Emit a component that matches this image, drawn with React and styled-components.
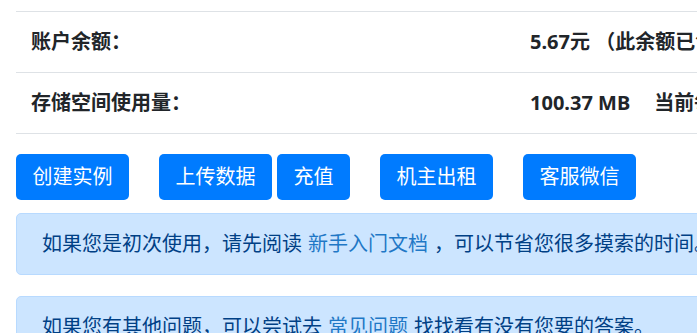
import React from "react";
import styled, { createGlobalStyle } from "styled-components";

const Global = createGlobalStyle`
  html, body { margin: 0; padding: 0; background: #fff; overflow: hidden; }
  body { font-family: "Noto Sans", "Noto Sans CJK SC", sans-serif; color: #212529; }
`;

const Page = styled.div`
  width: 1200px;
  padding: 11px 0 0 16px;
  box-sizing: border-box;
`;

const InfoTable = styled.div`
  display: flex;
  flex-direction: column;
  border-bottom: 1px solid #dee2e6;
`;

const Row = styled.div`
  display: grid;
  grid-template-columns: 499px 1fr;
  border-top: 1px solid #dee2e6;
`;

const Cell = styled.div`
  padding: 15px;
  font-size: 20px;
  line-height: 30px;
  font-weight: 700;
  white-space: nowrap;
  color: #212529;
`;

const Gap = styled.span`
  display: inline-block;
  width: ${(p) => p.w}px;
`;

const ButtonBar = styled.div`
  display: flex;
  margin-top: 20px;
`;

const Button = styled.button`
  margin-left: ${(p) => p.ml || 0}px;
  height: 46px;
  padding: 0 16.5px;
  border: none;
  border-radius: 5px;
  background: #007bff;
  color: #fff;
  font-family: "Noto Sans", "Noto Sans CJK SC", sans-serif;
  font-size: 20px;
  line-height: 30px;
  cursor: pointer;
`;

const Alert = styled.div`
  margin-top: ${(p) => p.mt}px;
  padding: 15px 25px;
  border: 1px solid #b8daff;
  border-radius: 5px;
  background: #cce5ff;
  color: #004085;
  font-size: 20px;
  line-height: 30px;
  white-space: nowrap;
`;

const Link = styled.a`
  color: #1f78c6;
  text-decoration: none;
  margin: 0 6px;
`;

export default function App() {
  return (
    <Page>
      <Global />
      <InfoTable>
        <Row>
          <Cell>账户余额：</Cell>
          <Cell>5.67元 （此余额已包含赠送金额）</Cell>
        </Row>
        <Row>
          <Cell>存储空间使用量：</Cell>
          <Cell>
            100.37 MB<Gap w={24} />当前每日存储费用 0.00 元
          </Cell>
        </Row>
      </InfoTable>
      <ButtonBar>
        <Button>创建实例</Button>
        <Button ml={30}>上传数据</Button>
        <Button ml={5}>充值</Button>
        <Button ml={30}>机主出租</Button>
        <Button ml={30}>客服微信</Button>
      </ButtonBar>
      <Alert mt={13}>
        如果您是初次使用，请先阅读<Link href="#">新手入门文档</Link>，可以节省您很多摸索的时间。
      </Alert>
      <Alert mt={21}>
        如果您有其他问题，可以尝试去<Link href="#">常见问题</Link>找找看有没有您要的答案。
      </Alert>
    </Page>
  );
}
